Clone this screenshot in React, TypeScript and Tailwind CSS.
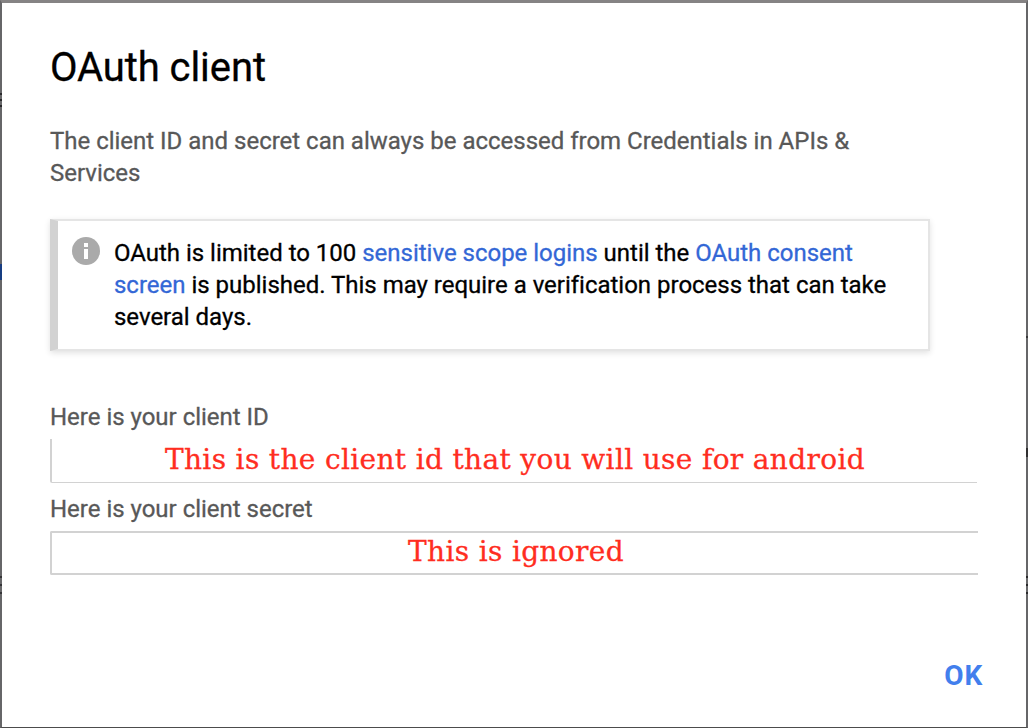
export default function App() {
  return (
    <div className="relative flex h-[728px] w-[1028px] flex-col border-x-2 border-t-[3px] border-b border-x-[#666668] border-t-[#858384] border-b-[#4c4c4c] bg-white pl-12 font-[Roboto,sans-serif] text-2xl leading-8 tracking-[-0.012px] text-[#585858] [-webkit-text-stroke:0.3px_currentColor]">
      <i className="absolute top-[90px] -left-[2px] h-[14px] w-[2px] bg-[repeating-linear-gradient(#29292b_0_2px,#68686a_2px_6px)]" />
      <i className="absolute top-[261px] -left-[2px] h-4 w-[2px] bg-[#173d82]" />
      <i className="absolute top-[573px] -left-[2px] h-[18px] w-[2px] bg-[repeating-linear-gradient(#343437_0_2px,#68686a_2px_8px)]" />
      <i className="absolute top-[333px] -right-[2px] h-[2px] w-[2px] bg-[#38383a]" />
      <i className="absolute top-[445px] -right-[2px] h-[9px] w-[2px] bg-[#302f30]" />
      <i className="absolute top-[573px] -right-[2px] h-[18px] w-[2px] bg-[repeating-linear-gradient(#29292b_0_2px,#68686a_2px_8px)]" />

      <h1 className="mt-[41px] h-12 text-[40px] leading-[48px] tracking-[-0.08px] whitespace-nowrap text-black">
        OAuth client
      </h1>
      <p className="mt-[33px] whitespace-nowrap">
        The client ID and secret can always be accessed from Credentials in APIs &amp;
        <br />
        Services
      </p>

      <section className="mt-[30px] flex h-[132px] w-[880px] border-2 border-l-8 border-[#e5e5e5] border-l-[#d2d2d2] pt-4 pl-[14px] text-black shadow-[0_2px_6px_rgba(0,0,0,0.12)]">
        <svg className="mr-[14px] size-7 shrink-0" viewBox="0 0 28 28">
          <circle cx="14" cy="14" r="14" fill="#aaaaaa" />
          <path d="M12 6h4v4h-4zM12 12h4v10h-4z" fill="#fff" />
        </svg>
        <p className="whitespace-nowrap">
          OAuth is limited to 100 <a className="text-[#3367d6]">sensitive scope logins</a> until the <a className="text-[#3367d6]">OAuth consent</a>
          <br />
          <a className="text-[#3367d6]">screen</a> is published. This may require a verification process that can take
          <br />
          several days.
        </p>
      </section>

      <label className="mt-[50px] h-8 whitespace-nowrap">Here is your client ID</label>
      <div className="mt-[6px] flex h-[44px] w-[927px] items-center justify-center rounded-bl-[2px] border-b border-l-2 border-[#d2d2d2] pb-[2px] pl-px font-['DejaVu_Serif',serif] text-[28px] tracking-[0.34px] whitespace-nowrap text-[#ff2d21]">
        This is the client id that you will use for android
      </div>
      <label className="mt-[10px] h-8 whitespace-nowrap">Here is your client secret</label>
      <div className="mt-[6px] flex h-[44px] w-[928px] items-center justify-center rounded-l-[2px] border-y-2 border-l-2 border-[#d2d2d2] pb-[2px] pl-[2px] font-['DejaVu_Serif',serif] text-[28px] tracking-[0.34px] whitespace-nowrap text-[#ff2d21]">
        This is ignored
      </div>
      <button className="mt-[85px] mr-[43px] self-end text-[28px] leading-8 font-bold tracking-[0.8px] text-[#427fed] [-webkit-text-stroke:0]">OK</button>
    </div>
  );
}
